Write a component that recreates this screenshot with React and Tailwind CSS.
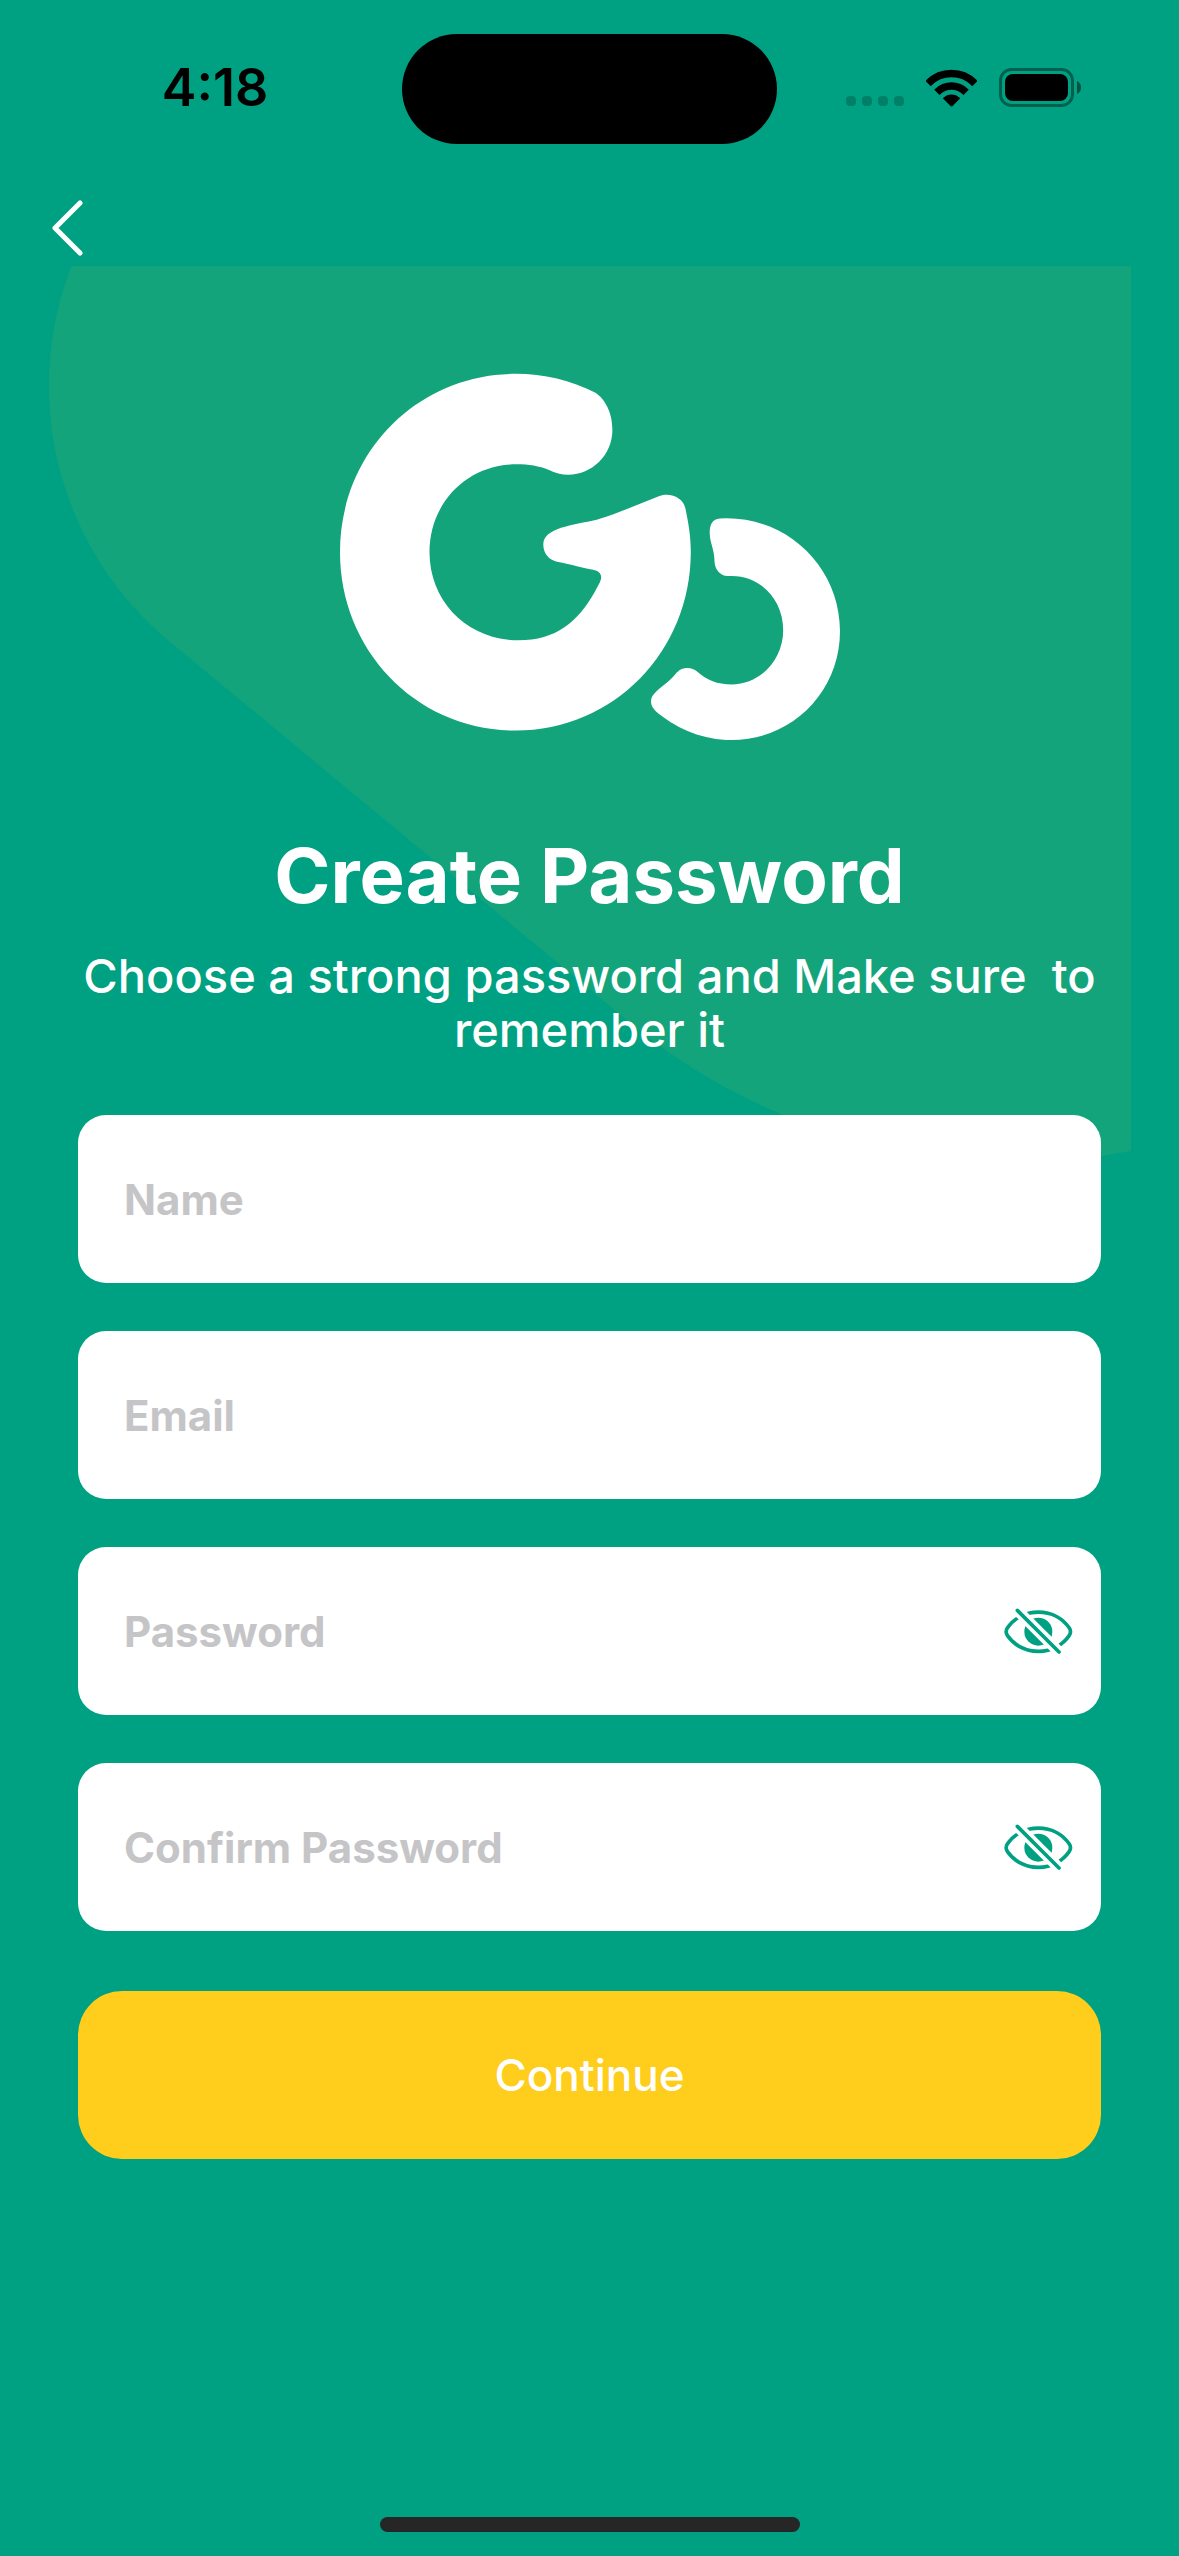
function SignalDots() {
  return (
    <span className="flex gap-1.5 pt-[26px]" aria-hidden="true">
      {[0, 1, 2, 3].map((dot) => (
        <span key={dot} className="size-2.5 rounded-[4px] bg-black/20" />
      ))}
    </span>
  );
}

function WifiIcon() {
  return (
    <svg className="h-[38px] w-[51px]" viewBox="0 0 51 38" aria-hidden="true">
      <clipPath id="wifi-wedge">
        <path d="M25.500 38 L-3 9.500 L-3 -6 H54 V9.500 Z" />
      </clipPath>
      <g clipPath="url(#wifi-wedge)" fill="none" stroke="#000">
        <circle cx="25.500" cy="37" r="32.500" strokeWidth="7.500" />
        <circle cx="25.500" cy="37" r="20" strokeWidth="7.500" />
        <circle cx="25.500" cy="37" r="5.500" strokeWidth="12" />
      </g>
    </svg>
  );
}

function BatteryIcon() {
  return (
    <svg className="h-[39px] w-[82px]" viewBox="0 0 82 39" aria-hidden="true">
      <rect x="1.500" y="1.500" width="72" height="36" rx="11" fill="none" stroke="#000" strokeOpacity="0.4" strokeWidth="3" />
      <rect x="6" y="6" width="63" height="27" rx="8" />
      <path d="M78 13 C80.500 14 82 16.500 82 19.500 S80.500 25 78 26 Z" fillOpacity="0.5" />
    </svg>
  );
}

function StatusBar() {
  return (
    <header className="grid h-[190px] grid-cols-[1fr_375px_1fr] items-start pt-[34px]">
      <time className="flex h-[108px] items-center justify-center pl-7 text-[52px] leading-none font-semibold text-black">
        4:18
      </time>
      <div className="h-[110px] rounded-full bg-black" />
      <div className="flex h-[107px] items-center justify-center pr-[30px]">
        <SignalDots />
        <span className="pl-[22px]">
          <WifiIcon />
        </span>
        <span className="pl-[22px]">
          <BatteryIcon />
        </span>
      </div>
    </header>
  );
}

function Watermark() {
  return (
    <svg className="absolute inset-x-12 top-0" viewBox="48 266 1083 896" aria-hidden="true">
      <path
        fill="#14a47b"
        d="M71.500 266 H1131 V1151 A608 608 0 0 1 628 1021 L169 641 A331 331 0 0 1 71.500 266 Z"
      />
    </svg>
  );
}

function Logo() {
  return (
    <svg className="h-[368px] w-[502px]" viewBox="339 373 502 368" fill="#fff" role="img" aria-label="Logo">
      <path d="M515.500 373.800 C544 373.800 571 380.500 595 392.500 C602 396.500 612.400 409 612.400 430 C612.400 455 592 474.700 568.300 474.700 C561.500 474.700 555 473 549 470 C539 466 529 464.300 516.500 464.300 C467 464.300 429.500 503 429.500 552 C429.500 602 468 640.300 518.500 640.300 C556 640.300 578 622 595 591.500 C597 587.500 601.200 581 601.200 577.500 C601.200 573.500 598.500 570.500 593 569.700 C583 568 572 564.500 557 561.700 C549 560 543.300 553.500 543.300 544.500 C543.300 528 573 525 596.700 519.800 C616 514 638 504.500 659.500 496 C662 495 664 494.700 666.700 494.700 C675.500 494.700 683.500 500 685.300 508 C688.500 523 690.800 536 690.800 552 C690.800 651 614 730.600 515.500 730.600 C417 730.600 340 651 340 552 C340 453 417 373.800 515.500 373.800 Z" />
      <path d="M726.500 518.200 C790 518.200 840 569 840 631 C840 692 792 740 731.500 740 C703 740 679 729.500 659 714 C654 710 651 706.500 651 701 C651 697.500 653 694.500 656.500 691.300 C663 685 670 681 675.500 674 C679 670 682 668 687.500 668 C691 668 694.500 669.200 698 672.300 C707 680.300 717 684.400 731.700 684.400 C760 684.400 783.200 660 783.200 630 C783.200 600 761 576 732 576 H727.500 C720 576 714.500 569 714.500 561 C714.500 550 709.700 542 709.700 533 C709.700 524.500 712.500 518.900 720 518.500 Z" />
    </svg>
  );
}

function HiddenEyeIcon() {
  return (
    <svg className="h-[46px] w-[69px]" viewBox="134 84 207 138" aria-hidden="true">
      <path
        d="M237 96.500 C280 96.500 312 118 330 144 Q337 155 330 166 C312 192 280 214 237 214 C194 214 162 192 144 166 Q137 155 144 144 C162 118 194 96.500 237 96.500 Z"
        fill="none"
        stroke="#00a182"
        strokeWidth="11"
      />
      <circle cx="237" cy="155" r="42" fill="#00a182" />
      <path d="M160 77 L314 231" stroke="#fff" strokeWidth="33" />
      <path d="M174 91 L299 216" stroke="#00a182" strokeWidth="11" strokeLinecap="round" />
    </svg>
  );
}

function Field({ id, label, type, secret }) {
  return (
    <div className="flex h-[168px] items-center rounded-[28px] bg-white pr-7 pl-[46px]">
      <input
        id={id}
        type={type}
        aria-label={label}
        placeholder={label}
        className="h-full min-w-0 flex-1 bg-transparent text-[42px] font-bold text-neutral-700 outline-none placeholder:text-[#c5c5c7]"
      />
      {secret && (
        <button type="button" aria-label={"Show " + label.toLowerCase()} className="shrink-0">
          <HiddenEyeIcon />
        </button>
      )}
    </div>
  );
}

const fields = [
  { id: "name", label: "Name", type: "text" },
  { id: "email", label: "Email", type: "email" },
  { id: "password", label: "Password", type: "password", secret: true },
  { id: "confirm-password", label: "Confirm Password", type: "password", secret: true },
];

export default function App() {
  return (
    <div className="flex min-h-screen flex-col bg-[#00a182] font-['Inter',sans-serif] text-white">
      <StatusBar />
      <nav className="flex h-[76px] items-center px-[50px]">
        <button type="button" aria-label="Back">
          <svg className="h-[56px] w-9" viewBox="0 0 36 56" fill="none" stroke="#fff" strokeWidth="5" strokeLinecap="round" strokeLinejoin="round" aria-hidden="true">
            <path d="M30 3 L5 28 L30 53" />
          </svg>
        </button>
      </nav>
      <main className="relative px-[78px]">
        <Watermark />
        <div className="relative flex flex-col items-center pt-[107px]">
          <Logo />
          <h1 className="mt-[90px] text-center text-[76px] leading-[88px] font-bold">Create Password</h1>
          <p className="mt-[30px] text-center text-[47px] leading-[54px] font-medium whitespace-pre-wrap">
            {"Choose a strong password and Make sure  to remember it"}
          </p>
        </div>
        <form className="relative mt-[58px] flex flex-col gap-12" onSubmit={(event) => event.preventDefault()}>
          {fields.map((field) => (
            <Field key={field.id} {...field} />
          ))}
          <button type="submit" className="mt-3 h-[168px] rounded-[44px] bg-[#ffcd1c] text-[44px] font-medium">
            Continue
          </button>
        </form>
      </main>
      <div className="mx-auto mt-auto mb-6 h-[15px] w-[420px] rounded-full bg-[#262626]" />
    </div>
  );
}
